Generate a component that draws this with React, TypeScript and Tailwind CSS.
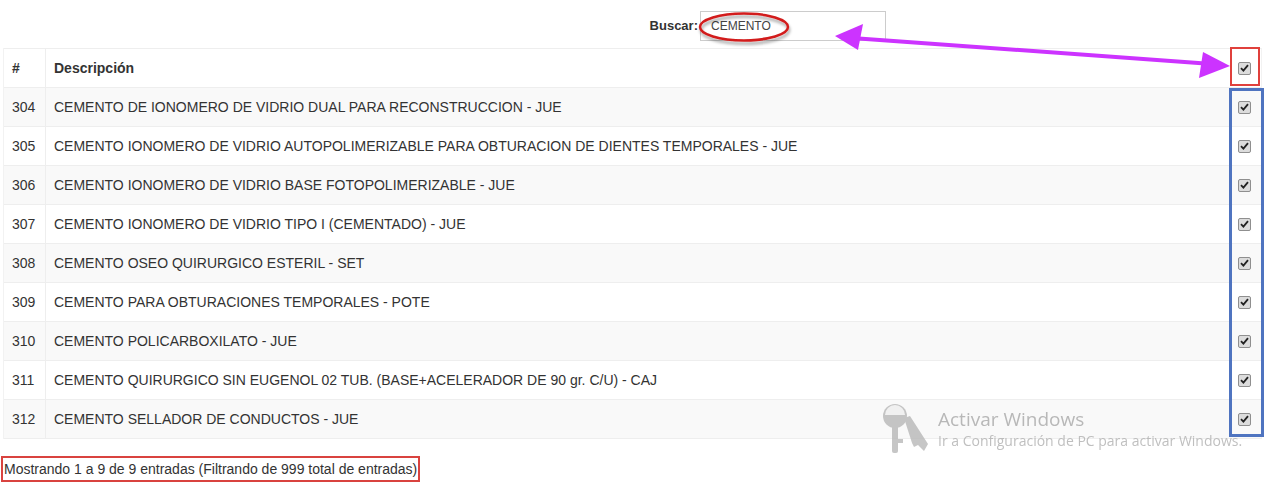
import React from "react";

const rows = [
  { id: 304, desc: "CEMENTO DE IONOMERO DE VIDRIO DUAL PARA RECONSTRUCCION - JUE" },
  { id: 305, desc: "CEMENTO IONOMERO DE VIDRIO AUTOPOLIMERIZABLE PARA OBTURACION DE DIENTES TEMPORALES - JUE" },
  { id: 306, desc: "CEMENTO IONOMERO DE VIDRIO BASE FOTOPOLIMERIZABLE - JUE" },
  { id: 307, desc: "CEMENTO IONOMERO DE VIDRIO TIPO I (CEMENTADO) - JUE" },
  { id: 308, desc: "CEMENTO OSEO QUIRURGICO ESTERIL - SET" },
  { id: 309, desc: "CEMENTO PARA OBTURACIONES TEMPORALES - POTE" },
  { id: 310, desc: "CEMENTO POLICARBOXILATO - JUE" },
  { id: 311, desc: "CEMENTO QUIRURGICO SIN EUGENOL 02 TUB. (BASE+ACELERADOR DE 90 gr. C/U) - CAJ" },
  { id: 312, desc: "CEMENTO SELLADOR DE CONDUCTOS - JUE" },
];

function Check() {
  return (
    <span className="flex h-[13px] w-[13px] items-center justify-center rounded-[2px] border border-[#8f8f8f] bg-[#dcdcdc]">
      <svg width="9" height="8" viewBox="0 0 9 8">
        <path d="M1 4.2 L3.4 6.6 L8 1.2" fill="none" stroke="#222" strokeWidth="1.8" />
      </svg>
    </span>
  );
}

function Annotations() {
  return (
    <svg className="pointer-events-none absolute left-0 top-0" width="1268" height="484">
      <defs>
        <filter id="sh" x="-20%" y="-40%" width="140%" height="180%">
          <feDropShadow dx="1" dy="3" stdDeviation="1.5" floodColor="#000" floodOpacity="0.35" />
        </filter>
      </defs>
      <ellipse cx="744" cy="27" rx="44" ry="13.5" fill="none" stroke="#d21c1c" strokeWidth="2.5" filter="url(#sh)" />
      <g fill="#cc33ff">
        <line x1="852" y1="38" x2="1212" y2="64" stroke="#cc33ff" strokeWidth="4" />
        <polygon points="835,36 863,24 858,50" />
        <polygon points="1230,66 1203,52 1199,78" />
      </g>
    </svg>
  );
}

function Watermark() {
  return (
    <div className="pointer-events-none absolute left-[880px] top-[403px] flex items-start gap-[6px] font-['Open_Sans',sans-serif] opacity-80">
      <svg width="52" height="52" viewBox="0 0 52 52">
        <g fill="#b8b8b8">
          <circle cx="15" cy="13" r="12" />
          <rect x="12" y="22" width="6" height="28" rx="2" />
          <rect x="18" y="36" width="5" height="4" />
          <path d="M24 15 L30 13 L48 41 L44 48 L38 42 L34 44 L32 40 Z" />
        </g>
        <path d="M5 12 A10 10 0 0 1 25 12 Z" fill="#efefef" />
      </svg>
      <div className="pt-[7px] leading-none">
        <div className="text-[19px] text-[#a8a8a8]">Activar Windows</div>
        <div className="mt-[5px] text-[14px] text-[#b0b0b0]">Ir a Configuración de PC para activar Windows.</div>
      </div>
    </div>
  );
}

export default function App() {
  return (
    <div className="relative h-[484px] w-[1268px] overflow-hidden bg-white font-['Liberation_Sans',Arial,sans-serif] text-[14px] text-[#333]">
      <div className="flex h-[48px] items-start justify-end pr-[382px] pt-[11px]">
        <label className="flex items-center gap-[2px]">
          <span className="text-[13px] font-bold text-[#333]">Buscar:</span>
          <span className="flex h-[30px] w-[186px] items-center border border-[#ccc] bg-white pl-[10px] text-[12px] text-[#444]">
            CEMENTO
          </span>
        </label>
      </div>

      <div className="ml-[3px] w-[1259px] border-x border-[#f2f2f2]">
        <div className="flex h-[40px] items-center border-y border-[#eeeeee] bg-white font-bold text-[#333]">
          <div className="flex h-full w-[42px] shrink-0 items-center border-r border-[#eeeeee] pl-[8px]">#</div>
          <div className="flex-1 pl-[8px]">Descripción</div>
          <div className="flex w-[34px] shrink-0 justify-center">
            <Check />
          </div>
        </div>
        {rows.map((r, i) => (
          <div
            key={r.id}
            className={
              "flex h-[39px] items-center border-b border-[#eeeeee] " +
              (i % 2 === 0 ? "bg-[#f9f9f9]" : "bg-white")
            }
          >
            <div className="flex h-full w-[42px] shrink-0 items-center border-r border-[#eeeeee] pl-[8px]">{r.id}</div>
            <div className="flex-1 pl-[8px]">{r.desc}</div>
            <div className="flex w-[34px] shrink-0 justify-center">
              <Check />
            </div>
          </div>
        ))}
      </div>

      <div className="mt-[17px] ml-[1px] inline-flex h-[26px] items-center border-2 border-[#d9433f] pl-[1px] pr-[1px] text-[14px] text-[#333]">
        Mostrando 1 a 9 de 9 entradas (Filtrando de 999 total de entradas)
      </div>

      <div className="pointer-events-none absolute left-[1230px] top-[47px] h-[39px] w-[30px] border-2 border-[#e0403c]" />
      <div className="pointer-events-none absolute left-[1229px] top-[88px] h-[349px] w-[35px] border-[3px] border-[#4f74c0]" />

      <Watermark />
      <Annotations />
    </div>
  );
}
